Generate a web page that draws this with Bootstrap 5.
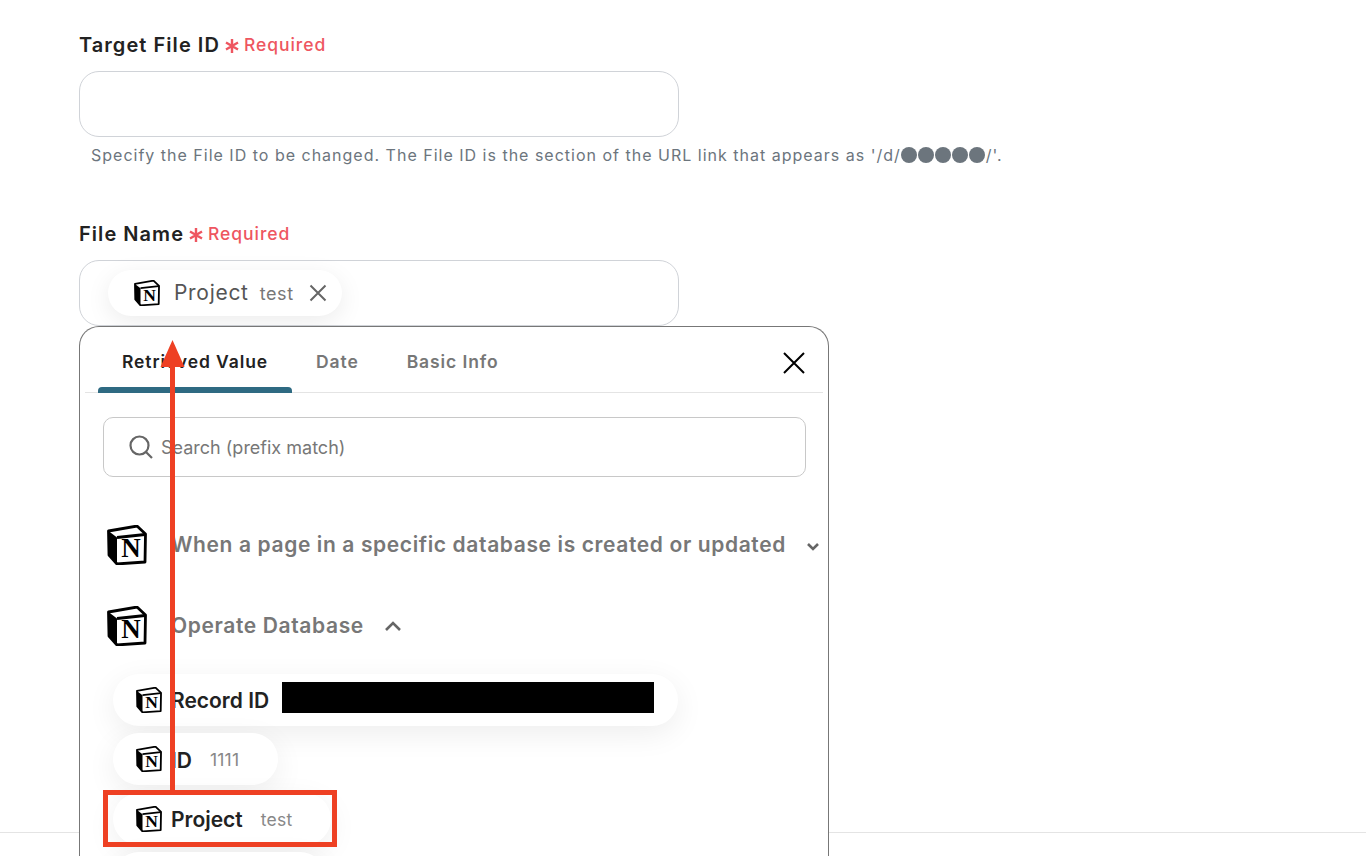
<!DOCTYPE html>
<html lang="en">
<head>
  <meta charset="UTF-8">
  <title>File settings</title>
  <link href="https://cdn.jsdelivr.net/npm/bootstrap@5.3.3/dist/css/bootstrap.min.css" rel="stylesheet">
  <style>
    html, body { height: 856px; overflow: hidden; }
    body { font-family: Inter, "Liberation Sans", sans-serif; color: #222; background: #fff; }
    .page-form { position: relative; height: 856px; overflow: hidden; padding: 30px 0 0 79px; }
    .field-label { display: flex; align-items: center; height: 29px; margin: 0 0 12px; font-size: 20px; font-weight: 600; letter-spacing: 1.05px; color: #222; }
    .req-mark { margin-left: 5px; padding-top: 2px; font-size: 17.5px; font-weight: 500; letter-spacing: .95px; color: #ee5660; display: flex; align-items: center; gap: 5px; }
    .field-box { width: 600px; height: 66px; border: 1px solid #d0d3d8; border-radius: 20px; background: #fff; }
    .field-help { margin: 9px 0 0 12px; height: 18px; font-size: 16px; line-height: 18px; letter-spacing: 1px; color: #6c757d; white-space: nowrap; }
    .help-dot { display: inline-block; width: 16px; height: 16px; border-radius: 50%; background: #6c757d; margin-right: 1px; vertical-align: -2px; }
    .field-gap { margin-top: 55px; }
    .value-chip { display: inline-flex; align-items: center; height: 46px; margin: 9px 0 0 28px; padding: 0 15px 0 26px; border-radius: 23px; background: #fff; box-shadow: 0 6px 24px rgba(0,0,0,.08); }
    .chip-name { margin-left: 14px; font-size: 21px; letter-spacing: .7px; color: #555; }
    .chip-val { margin-left: 11px; font-size: 18px; letter-spacing: .6px; color: #777; }
    .chip-x { margin-left: 15px; }
    .foot-line { position: absolute; left: 0; right: 0; top: 832px; border-top: 1px solid #e4e4e4; }
    .picker { position: absolute; z-index: 2; left: 79px; top: 326px; width: 750px; height: 530px; overflow: hidden; padding: 0 5px; border: 1px solid #777; border-bottom: 0; border-radius: 20px 20px 0 0; background: #fff; }
    .picker-tabs { position: relative; height: 66px; padding-left: 13px; border-bottom: 1px solid #e4e4e4; }
    .picker-tabs .nav-link { position: relative; display: flex; align-items: center; height: 66px; padding: 4px 24px 0; font-size: 17.5px; font-weight: 600; letter-spacing: .9px; color: #777; }
    .picker-tabs .nav-link.active { color: #222; }
    .picker-tabs .nav-link.active::after { content: ""; position: absolute; left: 0; right: 0; bottom: 0; height: 6px; border-radius: 4px 4px 0 0; background: #2e6a82; }
    .picker-close { position: absolute; right: 17px; top: 24px; line-height: 0; }
    .picker-search { display: flex; align-items: center; width: 703px; height: 60px; margin: 24px 0 0 18px; padding-left: 24px; border: 1px solid #c8c8c8; border-radius: 10px; }
    .picker-search span { margin-left: 7px; font-size: 18px; color: #777; }
    .source-row { display: flex; align-items: center; height: 40px; margin-left: 22px; white-space: nowrap; }
    .source-row + .source-row { margin-top: 41px; }
    .source-row svg { flex-shrink: 0; }
    .source-name { margin-left: 24px; font-size: 21px; font-weight: 600; letter-spacing: .62px; color: #777; }
    .source-chev { margin-left: 20px; }
    .chev-low { margin-top: 3px; }
    .value-list { display: flex; flex-direction: column; gap: 7.4px; align-items: flex-start; margin: 28px 0 0 28px; }
    .value-pill { display: flex; align-items: center; height: 52px; padding: 0 39px 0 23px; border-radius: 26px; background: #fff; box-shadow: 0 8px 30px rgba(0,0,0,.07); white-space: nowrap; }
    .pill-blank { width: 213px; }
    .pill-name { margin-left: 9px; padding-top: 2px; font-size: 21px; font-weight: 600; color: #222; }
    .pill-val { margin-left: 18px; padding-top: 2px; font-size: 17.5px; letter-spacing: .2px; color: #888; }
    .redacted-bar { width: 372px; height: 31px; margin: 0 -15px 5px 13px; background: #000; }
    .notion-n { font-family: "Liberation Serif", serif; font-weight: 700; font-size: 27px; fill: #000; text-anchor: middle; }
    .markup-layer { position: absolute; z-index: 3; left: 0; top: 0; pointer-events: none; }
  </style>
</head>
<body>
  <svg width="0" height="0" class="position-absolute">
    <symbol id="notion-box" viewBox="0 0 40 40">
      <path d="M1.500 6 30 1l8.500 8-.5 28-28 2-8-9z" fill="#fff" stroke="#000" stroke-width="2.800" stroke-linejoin="round"/>
      <path d="M1.500 6l8.500 6.500V39l-8-9z" fill="#000"/>
      <path d="M10 12.500 38 9.500" fill="none" stroke="#000" stroke-width="2.800"/>
    </symbol>
  </svg>

  <div class="page-form">
    <div class="field-label">Target File ID
      <span class="req-mark"><svg width="14" height="14" viewBox="0 0 14 14" fill="none" stroke="#ee5660" stroke-width="2.400"><path d="M7 0v14M1 3.500l12 7M13 3.500l-12 7"/></svg>Required</span>
    </div>
    <div class="field-box"></div>
    <p class="field-help">Specify the File ID to be changed. The File ID is the section of the URL link that appears as '/d/<i class="help-dot"></i><i class="help-dot"></i><i class="help-dot"></i><i class="help-dot"></i><i class="help-dot"></i>/'.</p>

    <div class="field-label field-gap">File Name
      <span class="req-mark"><svg width="14" height="14" viewBox="0 0 14 14" fill="none" stroke="#ee5660" stroke-width="2.400"><path d="M7 0v14M1 3.500l12 7M13 3.500l-12 7"/></svg>Required</span>
    </div>
    <div class="field-box">
      <div class="value-chip">
        <svg width="26" height="26" viewBox="0 0 40 40"><use href="#notion-box"/><text class="notion-n" x="24" y="32">N</text></svg>
        <span class="chip-name">Project</span>
        <span class="chip-val">test</span>
        <svg class="chip-x" width="18" height="18" viewBox="0 0 18 18" stroke="#666" stroke-width="2"><path d="M1.500 1.500l15 15M16.500 1.500l-15 15"/></svg>
      </div>
    </div>

    <div class="foot-line"></div>

    <div class="picker">
      <div class="picker-tabs">
        <ul class="nav">
          <li class="nav-item"><a class="nav-link active" href="#">Retrieved Value</a></li>
          <li class="nav-item"><a class="nav-link" href="#">Date</a></li>
          <li class="nav-item"><a class="nav-link" href="#">Basic Info</a></li>
        </ul>
        <a class="picker-close" href="#"><svg width="24" height="24" viewBox="0 0 24 24" stroke="#000" stroke-width="2"><path d="M2 2l20 20M22 2 2 22"/></svg></a>
      </div>
      <div class="picker-search">
        <svg width="26" height="26" viewBox="0 0 26 26" fill="none" stroke="#666" stroke-width="2.200"><circle cx="11.500" cy="11.500" r="9"/><path d="M18 18l6 6"/></svg>
        <span>Search (prefix match)</span>
      </div>

      <div class="source-row mt-5">
        <svg width="40" height="40" viewBox="0 0 40 40"><use href="#notion-box"/><text class="notion-n" x="24" y="32">N</text></svg>
        <span class="source-name">When a page in a specific database is created or updated</span>
        <svg class="source-chev chev-low" width="14" height="12" viewBox="0 0 14 12" fill="none" stroke="#666" stroke-width="2.600"><path d="M2 3l5 5 5-5"/></svg>
      </div>
      <div class="source-row">
        <svg width="40" height="40" viewBox="0 0 40 40"><use href="#notion-box"/><text class="notion-n" x="24" y="32">N</text></svg>
        <span class="source-name">Operate Database</span>
        <svg class="source-chev" width="18" height="12" viewBox="0 0 18 12" fill="none" stroke="#666" stroke-width="2.600"><path d="M2 10l7-7 7 7"/></svg>
      </div>

      <div class="value-list">
        <div class="value-pill">
          <svg width="26" height="26" viewBox="0 0 40 40"><use href="#notion-box"/><text class="notion-n" x="24" y="32">N</text></svg>
          <span class="pill-name">Record ID</span>
          <div class="redacted-bar"></div>
        </div>
        <div class="value-pill">
          <svg width="26" height="26" viewBox="0 0 40 40"><use href="#notion-box"/><text class="notion-n" x="24" y="32">N</text></svg>
          <span class="pill-name">ID</span>
          <span class="pill-val">1111</span>
        </div>
        <div class="value-pill">
          <svg width="26" height="26" viewBox="0 0 40 40"><use href="#notion-box"/><text class="notion-n" x="24" y="32">N</text></svg>
          <span class="pill-name">Project</span>
          <span class="pill-val">test</span>
        </div>
        <div class="value-pill pill-blank"></div>
      </div>
    </div>

    <svg class="markup-layer" width="1366" height="856" viewBox="0 0 1366 856">
      <path d="M172.500 790V362" stroke="#ee4023" stroke-width="5" fill="none"/>
      <path d="M172.500 340l12 27h-24z" fill="#ee4023"/>
      <rect x="105.500" y="792.500" width="229" height="52" fill="none" stroke="#ee4023" stroke-width="5"/>
    </svg>
  </div>
</body>
</html>
